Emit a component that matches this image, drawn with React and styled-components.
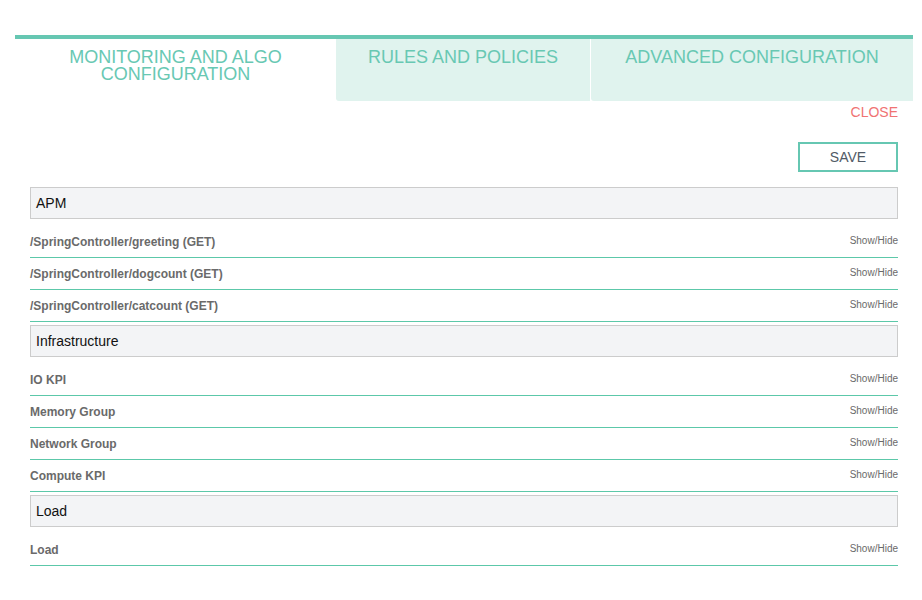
import React from "react"
import styled, { createGlobalStyle } from "styled-components"

const GlobalStyle = createGlobalStyle`
    body {
        margin: 0;
        background: #ffffff;
        font-family: "Liberation Sans", Arial, sans-serif;
    }
`

const Page = styled.div`
    padding: 35px 9px 20px 15px;
`

const TabBar = styled.div`
    display: flex;
    border-top: 4px solid #66c7b2;
    height: 62px;
`

const Tab = styled.div`
    width: ${(p) => p.width}px;
    flex: none;
    box-sizing: border-box;
    padding: 10px 10px 0;
    text-align: center;
    font-size: 18px;
    line-height: 17px;
    color: #68c8b3;
    background: ${(p) => (p.active ? "#ffffff" : "#e0f3ee")};
    border-bottom-left-radius: ${(p) => (p.active ? 0 : 3)}px;
    margin-left: ${(p) => p.gap || 0}px;
`

const Body = styled.div`
    padding: 0 15px;
`

const CloseRow = styled.div`
    display: flex;
    justify-content: flex-end;
    margin-top: 3px;
`

const CloseLink = styled.span`
    font-size: 14px;
    line-height: 16px;
    color: #f07373;
    cursor: pointer;
`

const SaveRow = styled.div`
    display: flex;
    justify-content: flex-end;
    margin-top: 22px;
`

const SaveButton = styled.button`
    width: 100px;
    height: 30px;
    box-sizing: border-box;
    border: 2px solid #66c7b2;
    background: #ffffff;
    font-family: "Liberation Sans", Arial, sans-serif;
    font-size: 14px;
    color: #505a66;
    cursor: pointer;
`

const Section = styled.div`
    margin-top: ${(p) => (p.first ? 15 : 3)}px;
`

const SectionHeader = styled.div`
    height: 32px;
    box-sizing: border-box;
    border: 1px solid #cccccc;
    background: #f3f4f6;
    display: flex;
    align-items: center;
    padding-left: 5px;
    font-size: 14px;
    color: #111111;
    margin-bottom: 7px;
`

const Row = styled.div`
    height: 32px;
    box-sizing: border-box;
    border-bottom: 1px solid #5cc8a9;
    display: flex;
    align-items: center;
    justify-content: space-between;
`

const RowLabel = styled.span`
    font-size: 12px;
    font-weight: 700;
    color: #6a6a6a;
`

const Toggle = styled.span`
    font-size: 10px;
    color: #6a6a6a;
    margin-top: -2px;
    cursor: pointer;
`

const sections = [
    {
        title: "APM",
        rows: [
            "/SpringController/greeting (GET)",
            "/SpringController/dogcount (GET)",
            "/SpringController/catcount (GET)",
        ],
    },
    {
        title: "Infrastructure",
        rows: ["IO KPI", "Memory Group", "Network Group", "Compute KPI"],
    },
    {
        title: "Load",
        rows: ["Load"],
    },
]

export default function App() {
    return (
        <Page>
            <GlobalStyle />
            <TabBar>
                <Tab active width={321}>MONITORING AND ALGO CONFIGURATION</Tab>
                <Tab width={254}>RULES AND POLICIES</Tab>
                <Tab width={322} gap={1}>ADVANCED CONFIGURATION</Tab>
            </TabBar>
            <Body>
                <CloseRow>
                    <CloseLink>CLOSE</CloseLink>
                </CloseRow>
                <SaveRow>
                    <SaveButton>SAVE</SaveButton>
                </SaveRow>
                {sections.map((section, i) => (
                    <Section key={section.title} first={i === 0}>
                        <SectionHeader>{section.title}</SectionHeader>
                        {section.rows.map((row) => (
                            <Row key={row}>
                                <RowLabel>{row}</RowLabel>
                                <Toggle>Show/Hide</Toggle>
                            </Row>
                        ))}
                    </Section>
                ))}
            </Body>
        </Page>
    )
}
